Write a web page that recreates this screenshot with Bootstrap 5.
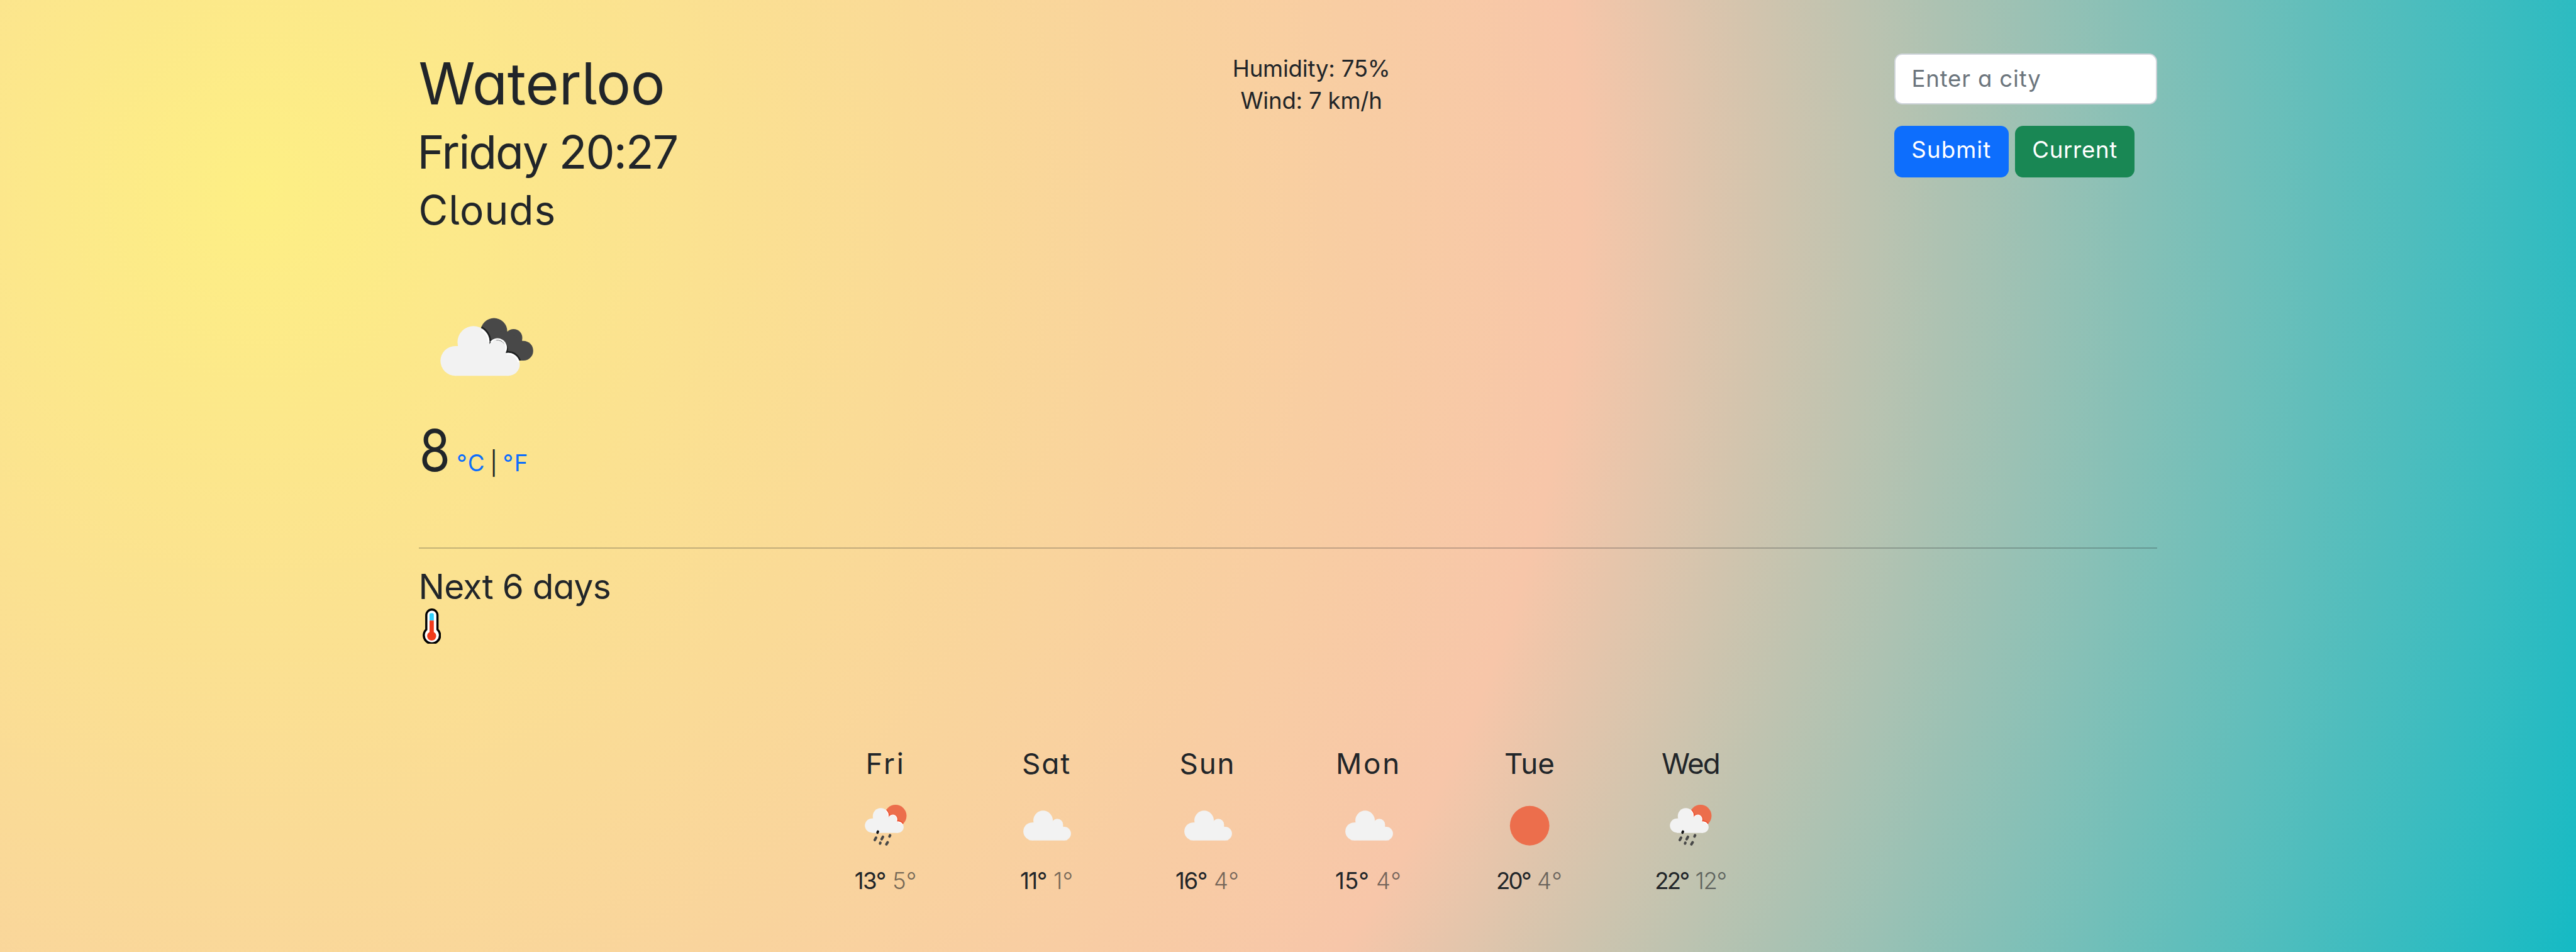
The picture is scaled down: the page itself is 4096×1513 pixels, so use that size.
<!DOCTYPE html>
<html lang="en">
<head>
<meta charset="utf-8">
<meta name="viewport" content="width=device-width, initial-scale=1">
<title>Weather</title>
<link href="https://cdn.jsdelivr.net/npm/bootstrap@5.3.0/dist/css/bootstrap.min.css" rel="stylesheet">
<style>
  :root { font-size: 34.1333px; --u: .0625rem; }
  body {
    min-height: 100vh;
    padding-top: calc(39.4 * var(--u));
    font-family: Inter, "Liberation Sans", sans-serif;
    font-feature-settings: "cv11", "cv05";
    font-weight: 400;
    font-size: calc(17.17 * var(--u));
    line-height: calc(24 * var(--u));
    color: #212529;
    background: radial-gradient(circle at 10% 20%, rgb(253, 239, 132) 0%, rgb(247, 198, 169) 54.2%, rgb(21, 186, 196) 100%);
  }
  .weather-app { width: 81rem; }
  .overview { height: calc(368.5 * var(--u)); }
  .place-col { width: 15.75rem; white-space: nowrap; }
  .search-col { width: calc(196.2 * var(--u)); padding-top: calc(.6 * var(--u)); }
  .conditions { padding-right: calc(21 * var(--u)); letter-spacing: -.006em; }
  .heading { margin: 0; font-weight: 430; white-space: nowrap; }
  .city { margin-top: calc(1.9 * var(--u)); font-size: calc(42.9 * var(--u)); line-height: calc(42 * var(--u)); letter-spacing: -.002em; }
  .moment { margin-top: calc(12.1 * var(--u)); margin-left: calc(-1 * var(--u)); font-size: calc(34.3 * var(--u)); line-height: calc(36 * var(--u)); letter-spacing: -.026em; }
  .sky { margin-top: calc(9.4 * var(--u)); font-size: calc(30 * var(--u)); line-height: calc(32 * var(--u)); letter-spacing: .016em; }
  .sky-icon { width: calc(100 * var(--u)); height: calc(100 * var(--u)); margin-top: calc(35.8 * var(--u)); }
  .temperature { margin-top: calc(3.1 * var(--u)); line-height: calc(48 * var(--u)); }
  .degrees { width: calc(28.3 * var(--u)); font-size: calc(42.9 * var(--u)); font-weight: 430; }
  .degrees span { transform: scaleX(.87); transform-origin: 10% 50%; }
  .units { letter-spacing: .04em; word-spacing: -.13em; }
  .units a { text-decoration: none; color: #0d6efd; }
  .divider { height: calc(1 * var(--u)); margin: 0; border: 0; background: #212529; opacity: .25; }
  .next { margin-top: calc(14.1 * var(--u)); font-size: calc(25.75 * var(--u)); line-height: calc(28.8 * var(--u)); letter-spacing: -.013em; }
  .thermometer { width: calc(13.8 * var(--u)); height: calc(26.6 * var(--u)); margin: calc(1.3 * var(--u)) 0 0 calc(2.8 * var(--u)); }
  .city-input {
    height: calc(38 * var(--u));
    padding: calc(5.4 * var(--u)) calc(12 * var(--u)) calc(6.6 * var(--u));
    border: calc(1 * var(--u)) solid #ced4da; border-radius: calc(6 * var(--u));
    font-size: calc(17.17 * var(--u)); font-weight: 400; line-height: calc(24 * var(--u)); letter-spacing: .022em;
    background: #fff; font-feature-settings: inherit;
  }
  .city-input::placeholder { color: #6c757d; opacity: 1; }
  .actions { gap: calc(4.8 * var(--u)); margin-top: calc(15.9 * var(--u)); }
  .actions .btn {
    height: calc(38.1 * var(--u)); padding: 0 0 calc(2.2 * var(--u)); border: 0; border-radius: calc(6 * var(--u));
    font-size: calc(17.17 * var(--u)); font-weight: 400; line-height: calc(24 * var(--u)); font-feature-settings: inherit;
  }
  .btn-submit { width: calc(85.3 * var(--u)); letter-spacing: .03em; }
  .btn-current { width: calc(89.1 * var(--u)); letter-spacing: .018em; }
  .forecast { margin-top: calc(77 * var(--u)); }
  .day { width: calc(120 * var(--u)); }
  .day-name { font-size: calc(21.46 * var(--u)); }
  .day-icon { width: calc(50 * var(--u)); height: calc(50 * var(--u)); margin: calc(9.7 * var(--u)) 0 calc(4.1 * var(--u)); }
  .temps { gap: calc(5.2 * var(--u)); }
  .temps .low { opacity: .6; font-weight: 360; }
  .s-wide { letter-spacing: .06em; }
  .s-mid { letter-spacing: .04em; }
  .s-tight { letter-spacing: -.04em; }
  .s-tighter { letter-spacing: -.075em; }
  .s-open { letter-spacing: .03em; }
</style>
</head>
<body>
<svg width="0" height="0" class="position-absolute" aria-hidden="true">
  <defs>
    <g id="cloud-day">
      <circle cx="101" cy="184" r="62"/><circle cx="177" cy="107" r="68"/><circle cx="276" cy="137" r="41"/><circle cx="325" cy="199" r="47"/>
      <path d="M101 122H245L317 145L325 246H101Z"/>
      <path d="M70 237L84 246H342L352 237Z"/>
    </g>
    <g id="cloud-rain">
      <circle cx="122" cy="173" r="50"/><circle cx="183" cy="107" r="56"/><circle cx="265" cy="133" r="33"/><circle cx="302" cy="184" r="41"/>
      <path d="M122 123H238L298 143L302 225H122Z"/>
    </g>
    <clipPath id="sun-clip"><circle cx="286" cy="105" r="77"/></clipPath>
    <symbol id="ico-cloud" viewBox="-32 -90 468.75 468.75"><use href="#cloud-day" fill="#f2f2f2"/></symbol>
    <symbol id="ico-sun" viewBox="-17 -60 468.75 468.75"><circle cx="217" cy="174" r="138" fill="#ec6e4c"/></symbol>
    <symbol id="ico-rain" viewBox="-17 -60 468.75 468.75">
      <circle cx="286" cy="105" r="77" fill="#ec6e4c"/>
      <g clip-path="url(#sun-clip)" fill="none" stroke="#ee3a18" stroke-width="10"><circle cx="183" cy="107" r="56"/><circle cx="265" cy="133" r="33"/><circle cx="302" cy="184" r="41"/></g>
      <use href="#cloud-rain" fill="#f2f2f2"/>
      <path d="M218 66A52 52 0 0 1 235 106M243 110A30 30 0 0 1 294 140M304 149A36 36 0 0 1 336 170" fill="none" stroke="#fff" stroke-width="6"/>
      <circle cx="160" cy="217" r="14" fill="#fff"/>
      <g stroke="#484848" stroke-linecap="round" stroke-width="18">
        <path d="M163 215L160 223" stroke="#161616"/>
        <path d="M248 241L244 249M198 252L189 268M150 258L141 274M180 293L178 299M231 290L222 304"/>
      </g>
    </symbol>
  </defs>
</svg>

<main class="weather-app mx-auto">
  <div class="overview d-flex">
    <div class="place-col d-flex flex-column align-items-start">
      <h1 class="heading city">Waterloo</h1>
      <h2 class="heading moment">Friday 20:27</h2>
      <h3 class="heading sky">Clouds</h3>
      <svg class="sky-icon d-block" viewBox="-105 -234 937.5 937.5" role="img" aria-label="Clouds">
        <defs>
          <g id="dark-cloud"><circle cx="420" cy="125" r="93"/><circle cx="557" cy="170" r="61"/><circle cx="625" cy="260" r="69"/><path d="M400 120L512 125L618 190L625 329H520L400 220Z"/></g>
          <clipPath id="dark-clip"><circle cx="420" cy="125" r="93"/><circle cx="557" cy="170" r="61"/><circle cx="625" cy="260" r="69"/><path d="M400 120L512 125L618 190L625 329H520L400 220Z"/></clipPath>
        </defs>
        <use href="#dark-cloud" fill="#484848"/>
        <g clip-path="url(#dark-clip)" fill="none" stroke="#1d1f20" stroke-width="24"><circle cx="277" cy="200" r="112"/><circle cx="440" cy="253" r="66"/><circle cx="520" cy="355" r="80"/></g>
        <g fill="#f2f2f2"><circle cx="150" cy="331" r="104"/><circle cx="277" cy="200" r="112"/><circle cx="440" cy="253" r="66"/><circle cx="520" cy="355" r="80"/><path d="M150 227H389L503 275L520 435H150Z"/></g>
        <path d="M338 115A105 105 0 0 1 383 198M398 201A60 60 0 0 1 500 262M508 282A74 74 0 0 1 592 340" fill="none" stroke="#fff" stroke-width="12"/>
      </svg>
      <div class="temperature d-flex align-items-baseline">
        <div class="degrees"><span class="d-inline-block">8</span></div>
        <span class="units"><a href="#">°C</a> | <a href="#">°F</a></span>
      </div>
    </div>
    <div class="conditions flex-grow-1 text-center">
      <div>Humidity: 75%</div>
      <div>Wind: 7 km/h</div>
    </div>
    <form class="search-col">
      <input type="text" class="form-control city-input" placeholder="Enter a city">
      <div class="actions d-flex">
        <button type="button" class="btn btn-primary btn-submit">Submit</button>
        <button type="button" class="btn btn-success btn-current">Current</button>
      </div>
    </form>
  </div>
  <hr class="divider">
  <h4 class="heading next">Next 6 days</h4>
  <svg class="thermometer d-block" viewBox="0 0 43 83" role="img" aria-label="Thermometer">
    <path d="M6 16A15.500 16 0 0 1 37 16V48A21.400 21.400 0 1 1 6 48Z" fill="#000"/>
    <path d="M11 15.500A10.500 10.500 0 0 1 32 15.500V50A16.300 16.300 0 1 1 11 50Z" fill="#fff"/>
    <path d="M16 28V15Q16 11 19 11H23Q26 11 26 15V28Z" fill="#32d0fa"/>
    <path d="M16 28H26V55A10.500 10.500 0 1 1 16 55Z" fill="#f13a1a"/>
  </svg>
  <section class="forecast d-flex justify-content-center">
    <div class="day d-flex flex-column align-items-center"><div class="day-name s-wide">Fri</div><svg class="day-icon"><use href="#ico-rain"/></svg><div class="temps d-flex"><span class="s-tight">13°</span><span class="low">5°</span></div></div>
    <div class="day d-flex flex-column align-items-center"><div class="day-name s-mid">Sat</div><svg class="day-icon"><use href="#ico-cloud"/></svg><div class="temps d-flex"><span class="s-tight">11°</span><span class="low">1°</span></div></div>
    <div class="day d-flex flex-column align-items-center"><div class="day-name s-mid">Sun</div><svg class="day-icon"><use href="#ico-cloud"/></svg><div class="temps d-flex"><span class="s-tight">16°</span><span class="low s-open">4°</span></div></div>
    <div class="day d-flex flex-column align-items-center"><div class="day-name s-wide">Mon</div><svg class="day-icon"><use href="#ico-cloud"/></svg><div class="temps d-flex"><span>15°</span><span class="low s-open">4°</span></div></div>
    <div class="day d-flex flex-column align-items-center"><div class="day-name">Tue</div><svg class="day-icon"><use href="#ico-sun"/></svg><div class="temps d-flex"><span class="s-tighter">20°</span><span class="low s-open">4°</span></div></div>
    <div class="day d-flex flex-column align-items-center"><div class="day-name s-tight">Wed</div><svg class="day-icon"><use href="#ico-rain"/></svg><div class="temps d-flex"><span class="s-tighter">22°</span><span class="low s-tight">12°</span></div></div>
  </section>
</main>
<script src="https://cdn.jsdelivr.net/npm/bootstrap@5.3.0/dist/js/bootstrap.bundle.min.js"></script>
</body>
</html>
